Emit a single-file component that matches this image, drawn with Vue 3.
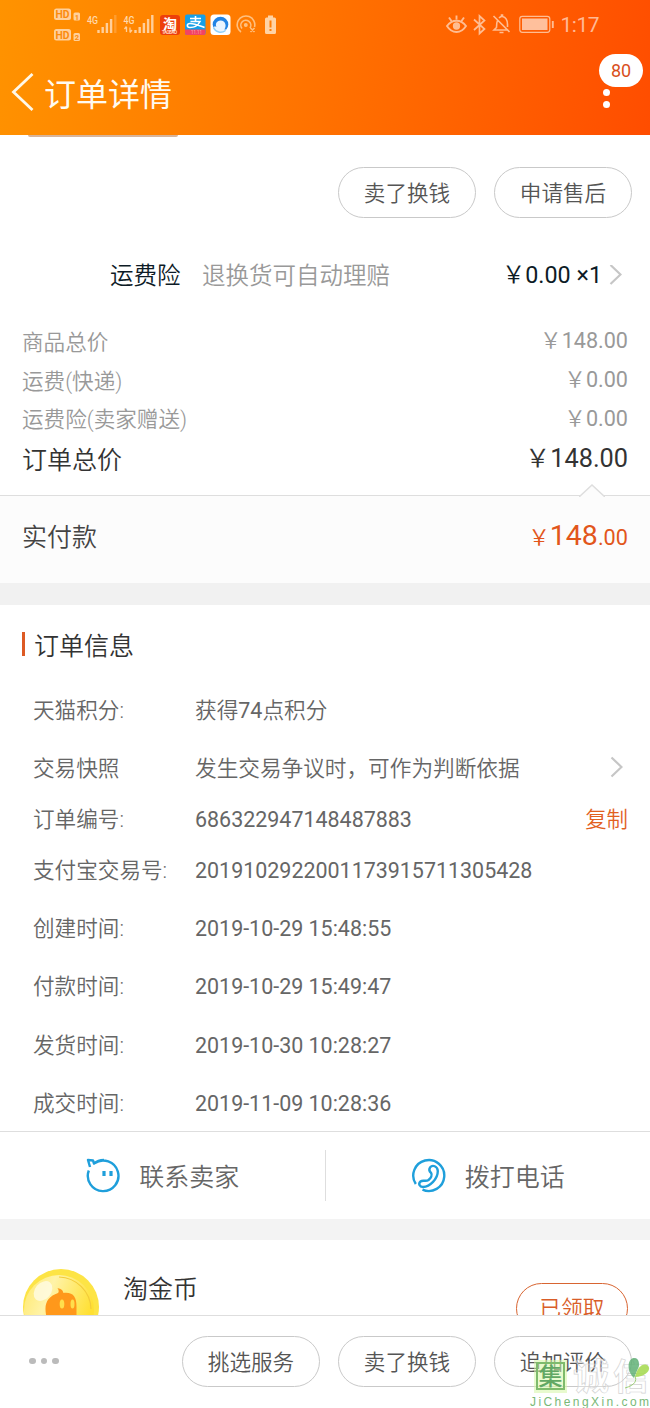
<script setup>
const prices = [
  { label: '商品总价', value: '148.00', h: 39 },
  { label: '运费(快递)', value: '0.00', h: 39 },
  { label: '运费险(卖家赠送)', value: '0.00', h: 38 },
  { label: '订单总价', value: '148.00', h: 43, total: true },
]
const info = [
  { label: '天猫积分:', value: ['获得', '74', '点积分'], h: 58 },
  { label: '交易快照', value: ['发生交易争议时，可作为判断依据'], h: 58, arrow: true },
  { label: '订单编号:', value: ['', '686322947148487883'], h: 44, copy: true },
  { label: '支付宝交易号:', value: ['', '2019102922001173915711305428'], h: 58 },
  { label: '创建时间:', value: ['', '2019-10-29 15:48:55'], h: 58 },
  { label: '付款时间:', value: ['', '2019-10-29 15:49:47'], h: 59 },
  { label: '发货时间:', value: ['', '2019-10-30 10:28:27'], h: 58 },
  { label: '成交时间:', value: ['', '2019-11-09 10:28:36'], h: 58 },
]
</script>

<template>
  <div class="page">
    <header class="header">
      <svg class="status" width="650" height="50" viewBox="0 0 650 50" fill="none">
        <g fill="#ffd09a">
          <rect x="54" y="8.500" width="17" height="11.500" rx="2.500" />
          <rect x="73.500" y="12.500" width="6.500" height="8" rx="1.500" />
          <rect x="54" y="29" width="17" height="11.500" rx="2.500" />
          <rect x="73.500" y="33" width="6.500" height="8" rx="1.500" />
        </g>
        <g class="st" fill="#fb8a0c">
          <text x="55.500" y="18" font-size="10" font-weight="700" textLength="14" lengthAdjust="spacingAndGlyphs">HD</text>
          <text x="74.800" y="19.500" font-size="7.500" font-weight="700">1</text>
          <text x="55.500" y="38.500" font-size="10" font-weight="700" textLength="14" lengthAdjust="spacingAndGlyphs">HD</text>
          <text x="74.800" y="40" font-size="7.500" font-weight="700">2</text>
        </g>
        <g class="st" fill="#ffd9ad" font-weight="500">
          <text x="87" y="23.500" font-size="11" textLength="11" lengthAdjust="spacingAndGlyphs">4G</text>
          <text x="123.500" y="23.500" font-size="11" textLength="11" lengthAdjust="spacingAndGlyphs">4G</text>
        </g>
        <g stroke="#ffcf9b" stroke-width="2.400">
          <path d="M98.500 33v-3M102.700 33v-6M106.900 33v-10M111.100 33v-14M135.500 33v-3M139.700 33v-6M143.900 33v-10M148.100 33v-14M152.300 33v-18" />
          <path d="M115.300 33v-18" opacity=".3" />
          <path d="M126.500 27v5M124.500 29l2-2.500M130 27.500v5M132 30l-2 2.500" stroke-width="1.300" />
        </g>
        <rect x="160" y="15" width="20" height="20" rx="3" fill="#ed3f0b" />
        <text class="cj" x="163" y="28.500" font-size="14" font-weight="700" fill="#fff">淘</text>
        <text class="st" x="162" y="33.800" font-size="4.500" font-weight="700" fill="#ffd5c0" textLength="15">TAOBAO</text>
        <rect x="185" y="14.500" width="20.500" height="20.500" rx="2" fill="#159fe6" />
        <path d="M185 29.500h20.500v3.500a2 2 0 0 1-2 2h-16.500a2 2 0 0 1-2-2z" fill="#f24462" />
        <path d="M190 18.500h11M195.500 16v5M190.500 21.500h9.500c-2 4-6 6-10 6-3.500 0-3.500-4 0-4 4.500 0 9 2 14.500 4" stroke="#fff" stroke-width="1.600" />
        <text class="st" x="191" y="34" font-size="4.500" fill="#ffd5dd">11.11</text>
        <rect x="210.500" y="14.500" width="20" height="20.500" rx="3.500" fill="#fff" />
        <circle cx="220.500" cy="24.500" r="7.800" fill="#2384e4" />
        <path d="M213.300 27.500c2 5.500 9.500 6.500 13.500 2-1.500.2-2.500 0-2.500 0 2.500-3 1.500-9-3.800-9-4 0-5.500 4-4 6.500-1.500-.8-3-.2-3.200.5z" fill="#eaf5ff" />
        <path d="M213.500 27.500c2 5 8 6 12 3" stroke="#8fd0f7" stroke-width="1.500" />
        <g stroke="#ffc07f" stroke-width="1.600">
          <path d="M241 32a8.800 8.800 0 1 1 13.500-5M242 28.500a5 5 0 1 1 8-.5M250.500 28l4 4M254.500 28l-4 4" />
          <circle cx="245.800" cy="25" r="1.200" fill="#ffc07f" />
        </g>
        <path d="M268 15.500h5v2h1.500a1.500 1.500 0 0 1 1.500 1.500v13.500a1.500 1.500 0 0 1-1.500 1.500h-8a1.500 1.500 0 0 1-1.500-1.500v-13.500a1.500 1.500 0 0 1 1.500-1.500h1.500z" fill="#ffd3a5" />
        <path d="M270.500 20.500v7M270.500 29v2" stroke="#ff7f08" stroke-width="2" />
        <g stroke="#ffbd92" stroke-width="1.900">
          <path d="M447 26c5-7 14-7 19 0-5 8-14 8-19 0zM449 17.500l2.500 3.500M456.500 15.500v4M464 17.500l-2.500 3.500" />
          <circle cx="456.500" cy="26" r="2.700" fill="#ffbd92" />
          <path d="M474 19.500l10.500 9.500-5 4.500v-17.500l5 4.500-10.500 9.500" stroke-width="1.700" />
          <path d="M493.500 16l16 16M497.500 20.500c-1 2-1 4-1 7l-2.500 2.500h13M499 18c1-1 1.500-1.300 2.500-1.500v-1.500h1v1.500c4 1 5 3.500 5 8v2.500M499.500 32.500h4" stroke-width="1.600" />
          <rect x="519.800" y="16.300" width="30" height="16" rx="2.500" stroke-width="1.200" />
          <path d="M552.800 21v7" />
        </g>
        <rect x="522" y="18.500" width="25.500" height="11.500" fill="#ffc09c" />
        <text class="st" x="560.500" y="32" font-size="21" font-weight="400" fill="#ffb995" textLength="39">1:17</text>
      </svg>
      <div class="bar">
        <svg width="24" height="40" viewBox="0 0 24 40" fill="none" stroke="#fff8e8" stroke-width="2.800"><path d="M21.500 1L2.500 19L21.500 37" /></svg>
        <h1>订单详情</h1>
        <div class="more"><i></i><i></i><span class="badge">80</span></div>
      </div>
    </header>

    <section class="actions">
      <div class="edge"></div>
      <div class="btn">卖了换钱</div>
      <div class="btn">申请售后</div>
    </section>
    <section class="insure">
      <span>运费险</span><span class="muted">退换货可自动理赔</span>
      <span class="qty"><span class="yen">￥</span>0.00 ×1</span>
      <svg width="13" height="22" viewBox="0 0 13 22" fill="none" stroke="#c6c6c6" stroke-width="2.200"><path d="M1.500 0l10 9.500-10 9.500" /></svg>
    </section>
    <section class="prices">
      <div v-for="p in prices" :key="p.label" class="price" :class="{ total: p.total }" :style="{ height: p.h + 'px' }">
        <span>{{ p.label }}</span><span class="val"><span class="yen">￥</span>{{ p.value }}</span>
      </div>
    </section>
    <section class="paid">
      <svg class="notch" width="26" height="13" viewBox="0 0 26 13"><path d="M0 13L13 1L26 13" fill="#fcfcfc" stroke="#dedede" stroke-width="1.500" /></svg>
      <span>实付款</span><span class="sum"><span class="yen">￥</span><b>148</b>.00</span>
    </section>
    <div class="gap"></div>

    <section class="info">
      <h2>订单信息</h2>
      <div v-for="r in info" :key="r.label" class="row" :style="{ height: r.h + 'px' }">
        <span class="key">{{ r.label }}</span><span class="cjk">{{ r.value[0] }}<span v-if="r.value[1]" class="num">{{ r.value[1] }}</span>{{ r.value[2] }}</span>
        <svg v-if="r.arrow" class="end arrow" width="13" height="22" viewBox="0 0 13 22" fill="none" stroke="#c6c6c6" stroke-width="2.200"><path d="M1.500 1.500l10 9.500-10 9.500" /></svg>
        <span v-if="r.copy" class="end copy">复制</span>
      </div>
    </section>

    <section class="contact">
      <div class="half">
        <svg width="36" height="36" viewBox="0 0 36 36" fill="none" stroke="#1f9fdb" stroke-width="2.400">
          <path d="M3.800 12.500A15.300 15.300 0 1 0 9.500 5.200M5 9L3 2L8 2.500L9 5.500C12 2.800 15 2 19 2" stroke-linejoin="round" />
          <path d="M19 13v5M26 13v5" stroke-width="3.200" />
        </svg>
        <span>联系卖家</span>
      </div>
      <div class="half">
        <svg width="36" height="36" viewBox="0 0 36 36" fill="none" stroke="#1f9fdb" stroke-width="2.400">
          <path d="M4.800 26A15.500 15.500 0 1 1 11.500 31.700" />
          <path d="M19 9.500C17.500 12 18.500 13.500 20 14.800C21.500 17 20 20 17.500 22C14.500 24 12 21.500 9.500 23.500C7 25.800 8.500 29 12 29C19 28.500 26.800 21 26.800 13C26.500 8 21.500 6.500 19 9.500Z" />
        </svg>
        <span>拨打电话</span>
      </div>
    </section>
    <div class="gap small"></div>

    <section class="coin">
      <svg width="78" height="78" viewBox="0 0 78 78">
        <defs><linearGradient id="gold" x1="0" x2="1" y1="0" y2=".4"><stop stop-color="#ffe86a" /><stop offset=".4" stop-color="#fff3a8" /><stop offset="1" stop-color="#ffe032" /></linearGradient></defs>
        <circle cx="38" cy="38" r="38" fill="#fde445" />
        <circle cx="36" cy="41" r="35" fill="url(#gold)" />
        <path d="M36 8A33 33 0 0 1 68 40" fill="none" stroke="#f3cc3a" stroke-width="1.200" />
        <ellipse cx="20" cy="22" rx="8" ry="11" transform="rotate(40 20 22)" fill="#fffbe5" opacity=".8" />
        <path d="M24 50c-4-15 0-22 11-26 1-1 1-3-.5-5 4 1 5 2 6 5 10-1 13 4 13 14v12z" fill="#ff981b" />
        <ellipse cx="39" cy="35" rx="2.300" ry="4.500" fill="#ffde4c" /><ellipse cx="49.500" cy="35" rx="2" ry="4.500" fill="#ffde4c" />
      </svg>
      <span class="name">淘金币</span>
      <div class="got">已领取</div>
    </section>

    <footer class="foot">
      <div class="dots"><i></i><i></i><i></i></div>
      <div class="btn">挑选服务</div>
      <div class="btn">卖了换钱</div>
      <div class="btn">追加评价</div>
      <svg class="mark" width="124" height="54" viewBox="0 0 124 54">
        <rect x="5" y="6" width="33" height="33" fill="#d6f5a6" opacity=".55" />
        <rect x="8" y="9" width="27" height="26" fill="none" stroke="#7ebb6c" stroke-width="2" />
        <text class="cj" x="9.500" y="31" font-size="24" font-weight="500" fill="#62a864">集</text>
        <text class="cj" x="44" y="36" font-size="36" font-weight="700" fill="#ffffff" fill-opacity=".3" stroke="#d4d4d4" stroke-width=".7" textLength="76">诚信</text>
        <path d="M105 24c-6-5-8-17-1-20 6-1 6 5 6 8z" fill="#58ad6e" opacity=".8" />
        <path d="M106 23c2-9 7-14 12-12 5 3 1 11-12 12z" fill="#a9dc55" opacity=".9" />
        <path d="M106 22c2 5 0 9-10 12" fill="none" stroke="#9cce77" />
        <text class="ar" x="1" y="52" font-size="12" fill="#79b978" textLength="119">JiChengXin.com</text>
      </svg>
    </footer>
  </div>
</template>

<style>
body { margin: 0; background: #fff; }
</style>
<style scoped>
.page { width: 650px; height: 1408px; overflow: hidden; display: flex; flex-direction: column; background: #fff; color: #666; font: 350 21.6px/30px Roboto, "Noto Sans CJK SC", sans-serif; }
.page > * { box-sizing: border-box; flex-shrink: 0; }
.header { height: 135px; background: linear-gradient(100deg, #ff9300, #ff7300 48%, #ff4d00); }
.status { display: block; }
.st { font-family: Roboto, sans-serif; }
.cj { font-family: "Noto Sans CJK SC", sans-serif; }
.ar { font-family: "Liberation Sans", sans-serif; }
.bar { height: 85px; display: flex; align-items: center; padding: 0 40px 0 11px; box-sizing: border-box; position: relative; }
h1 { margin: 4px 0 0 9px; font-size: 32px; line-height: 40px; font-weight: 400; color: #fffaf0; }
.more { margin-left: auto; display: flex; flex-direction: column; gap: 5px; padding-top: 12px; position: relative; }
.more i { width: 7px; height: 7px; border-radius: 50%; background: #fff; }
.badge { position: absolute; left: -4px; top: -23px; width: 44px; height: 33px; border-radius: 17px; background: #fff; color: #d9501c; font-size: 18px; line-height: 34px; text-align: center; font-weight: 400; }
.actions { height: 83px; padding: 32px 18px 0 0; display: flex; justify-content: flex-end; gap: 18px; position: relative; }
.edge { position: absolute; left: 28px; top: 0; width: 150px; height: 1.500px; background: #d7b49b; border-radius: 0 0 4px 4px; }
.btn { box-sizing: border-box; width: 138px; height: 51px; border: 1px solid #c9c9c9; border-radius: 26px; text-align: center; line-height: 52px; color: #555; }
.insure { height: 104px; display: flex; align-items: center; padding: 11px 28px 0 110px; color: #0d1b26; font-size: 23.500px; }
.muted { margin-left: 21.500px; color: #999; }
.qty { margin-left: auto; margin-right: 7px; margin-top: -2px; font-weight: 400; font-size: 23.300px; }
.yen { font-weight: 350; }
.prices { height: 173px; }
.price { display: flex; align-items: center; justify-content: space-between; padding: 2px 22px 0; box-sizing: border-box; color: #999; }
.price .val { font-weight: 400; margin-top: -3px; }
.total { color: #333; font-size: 25px; }
.total .val { font-size: 25.300px; }
.paid { height: 88px; background: #fcfcfc; border-top: 1px solid #dedede; display: flex; justify-content: space-between; align-items: center; padding: 0 22px 3px; font-size: 25px; color: #444; position: relative; }
.notch { position: absolute; left: 579px; top: -12px; }
.sum { color: #e2561b; font-size: 21.700px; font-weight: 400; margin-top: -2px; }
.sum b { font-size: 28.500px; font-weight: 400; }
.gap { height: 22px; background: #f1f1f1; }
.small { height: 21px; background: #f3f3f3; }
.info { height: 526px; padding: 0 22px; }
h2 { margin: 27px 0 25px; height: 24px; border-left: 3px solid #dd5a24; padding-left: 9px; font-size: 25px; line-height: 29px; font-weight: 350; color: #333; }
.row { display: flex; align-items: center; padding-left: 11px; font-weight: 400; font-size: 21.450px; }
.key { width: 162px; margin-top: 1px; font-weight: 350; font-size: 21.600px; }
.cjk { font-weight: 350; font-size: 21.650px; margin-top: 1px; }
.num { font-weight: 400; font-size: 21.450px; }
.end { margin-left: auto; }
.arrow { margin-right: 5px; margin-top: -2px; }
.copy { color: #e2601f; font-weight: 350; margin-top: 1px; }
.contact { height: 88px; border-top: 1px solid #dedede; display: flex; align-items: center; font-size: 25px; }
.contact span { margin-top: 4px; }
.half { flex: 1; height: 51px; display: flex; align-items: center; justify-content: center; gap: 18px; }
.half + .half { border-left: 1px solid #dedede; }
.coin { height: 75px; overflow: hidden; display: flex; align-items: flex-start; padding: 29px 22px 0 23px; }
.name { margin: 6px 0 0 22px; color: #333; font-size: 25px; }
.got { margin: 14px 0 0 auto; box-sizing: border-box; width: 112px; height: 51px; border: 1.500px solid #d86532; border-radius: 26px; color: #d95e29; text-align: center; line-height: 49px; }
.foot { height: 93px; border-top: 1px solid #dedede; display: flex; align-items: center; gap: 18px; padding: 0 18px 2px 29px; position: relative; }
.dots { display: flex; gap: 5px; margin-right: auto; }
.dots i { width: 6.500px; height: 6.500px; border-radius: 50%; background: #bbb; }
.mark { position: absolute; right: -3px; bottom: 0; }
</style>
